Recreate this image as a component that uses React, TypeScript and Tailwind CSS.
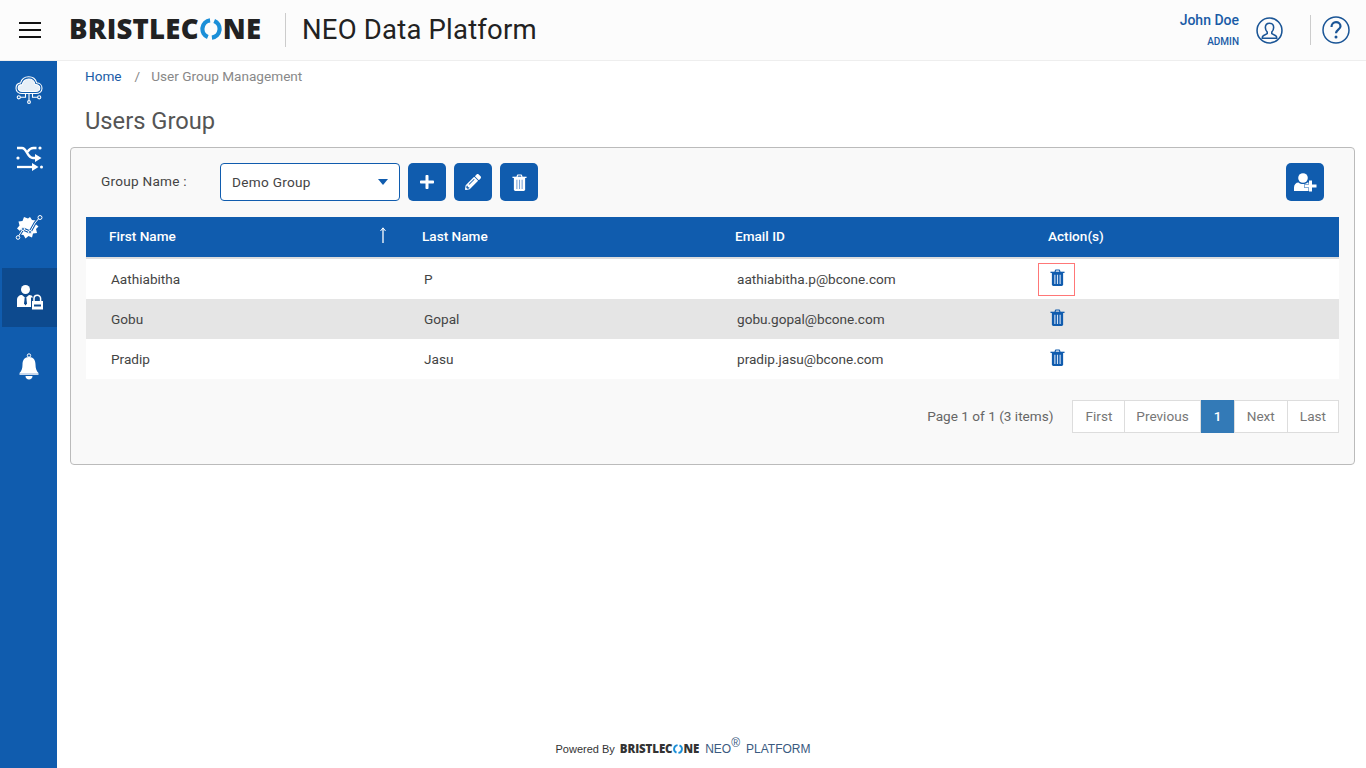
import { FaPlus, FaPencilAlt } from 'react-icons/fa';

const rows = [
  { first: 'Aathiabitha', last: 'P', email: 'aathiabitha.p@bcone.com' },
  { first: 'Gobu', last: 'Gopal', email: 'gobu.gopal@bcone.com' },
  { first: 'Pradip', last: 'Jasu', email: 'pradip.jasu@bcone.com' },
];

function Logo({ small }: { small?: boolean }) {
  return (
    <span
      className={
        small
          ? 'inline-flex items-center font-["Open_Sans",sans-serif] text-[11.5px] leading-none font-extrabold tracking-[-0.1px] text-[#333]'
          : 'inline-flex items-center font-["Open_Sans",sans-serif] text-[27.5px] leading-none font-extrabold tracking-[0.25px] text-[#222]'
      }
    >
      BRISTLEC
      <svg viewBox="0 0 24 24" className={small ? 'mx-[0.5px] h-[10px] w-[10px]' : 'mx-px h-[22px] w-[22px]'}>
        <path d="M15.500 3.200A9.500 9.500 0 0 1 13 21.400" fill="none" stroke="#1b8fd8" strokeWidth="4.600" />
        <path d="M8.500 20.800A9.500 9.500 0 0 1 11 2.600" fill="none" stroke="#1b8fd8" strokeWidth="4.600" />
      </svg>
      NE
    </span>
  );
}

function CloudIcon() {
  return (
    <svg viewBox="0 0 28 28" className="h-7 w-7" fill="none" stroke="#fff" strokeWidth="1.100">
      <path d="M7 17.500c-3.500 0-6-2.300-6-5.300 0-2.800 2-4.900 4.600-5.300C6.600 3 10 .8 13.700.8c4 0 7 2.600 8 6 3 .2 5.300 2.500 5.300 5.400 0 3-2.500 5.300-6 5.300Z" />
      <path d="M7.500 15.500c-2.500 0-4.300-1.500-4.300-3.500s1.700-3.400 4-3.400C8 5 10.500 3 13.700 3c3.300 0 5.700 2.300 6.300 5.500 2.700-.2 4.800 1.300 4.800 3.500s-1.800 3.500-4.300 3.500Z" fill="#fff" fillOpacity="0.9" />
      <path d="M14 17.500v7M10.500 17.500v3.800H5.500M17.500 17.500v3.800h5" />
      <circle cx="14" cy="26" r="1.400" />
      <circle cx="3.800" cy="21.300" r="1.600" />
      <circle cx="24.200" cy="21.300" r="1.600" />
    </svg>
  );
}

function FlowIcon() {
  return (
    <svg viewBox="0 0 28 28" className="h-7 w-7" fill="none" stroke="#fff" strokeWidth="2.300">
      <path d="M2 4h5c5 0 5 10 11 10h4" />
      <path d="M12.500 8c1.500-2.500 3-4 6-4h3" />
      <path d="M2 23h16" />
      <path d="M20 10l6.500 4-6.500 4zM17 19l6.500 4-6.500 4z" fill="#fff" stroke="none" />
      <circle cx="25" cy="4" r="1.600" fill="#fff" stroke="none" />
      <circle cx="3" cy="14" r="1.600" fill="#fff" stroke="none" />
      <circle cx="26.500" cy="23" r="1.500" fill="#fff" stroke="none" />
    </svg>
  );
}

function GearIcon() {
  return (
    <svg viewBox="0 0 28 28" className="h-7 w-7">
      <path
        d="M9 3l4 1.500L15 3l2 3 4 .5-.5 3.500 3 2.500-2.500 2.500 1 4-4 .5-1 4-3.500-1.500-3 2.500-2-3.500-4-.5.5-3.500-3-2.500 2.500-3-1-4 4-.5z"
        fill="#fff"
      />
      <path d="M3 23l5-8 7 3 5-9 5-6" fill="none" stroke="#105cae" strokeWidth="3" />
      <path d="M3 23l5-8 7 3 5-9 5-6" fill="none" stroke="#fff" strokeWidth="1" />
      <circle cx="25" cy="3.500" r="2" fill="#105cae" stroke="#fff" strokeWidth="1" />
      <circle cx="8" cy="15" r="1.500" fill="#105cae" stroke="#fff" strokeWidth="1" />
      <circle cx="15" cy="18" r="1.500" fill="#105cae" stroke="#fff" strokeWidth="1" />
      <circle cx="3" cy="23.500" r="1.800" fill="#105cae" stroke="#fff" strokeWidth="1" />
    </svg>
  );
}

function UserLockIcon() {
  return (
    <svg viewBox="0 0 28 28" className="h-7 w-7" fill="#fff">
      <circle cx="9.500" cy="5.500" r="4.500" />
      <path d="M1 23v-7c0-3 2-5 5-5l3.500 3 3.500-3c2 0 3.500 .8 4 2.500h-2v9.500Z" />
      <path d="M8.700 13.500h1.600l.7 6-1.500 2-1.500-2z" fill="#0d4a8e" />
      <path d="M18 17v-2.500a3.300 3.300 0 0 1 6.600 0V17" fill="none" stroke="#fff" strokeWidth="1.500" />
      <path d="M16 17h11v8.500H16z" />
      <path d="M18 20.500h7v2h-7z" fill="#0d4a8e" />
    </svg>
  );
}

function BellIcon() {
  return (
    <svg viewBox="0 0 28 28" className="h-7 w-7" fill="#fff">
      <circle cx="14" cy="2.500" r="1.700" fill="none" stroke="#fff" strokeWidth="1" />
      <path d="M14 4c4.500 0 6.500 3 6.500 7.500 0 4 1 6.500 3 8.500H4.500c2-2 3-4.500 3-8.500C7.500 7 9.500 4 14 4Z" />
      <path d="M4.500 20h19v2h-19z" fill="#c9d8ec" />
      <path d="M10.500 23h7c0 2-1.500 3.500-3.500 3.500s-3.500-1.500-3.500-3.500Z" />
    </svg>
  );
}

function TrashIcon({ body, stripe }: { body: string; stripe: string }) {
  return (
    <svg viewBox="0 0 16 18" className="h-[17px] w-[15px]">
      <path d="M5.200 3 6.200 1h3.600l1 2" fill="none" stroke={body} strokeWidth="1.300" />
      <path d="M.5 2.800h15v1.400H.5z" fill={body} />
      <path d="M2 4h12v12.500q0 1.500-1.500 1.500h-9Q2 18 2 16.500z" fill={body} />
      <path d="M4.600 6h1.200v10H4.600zM7.400 6h1.200v10H7.400zM10.200 6h1.200v10h-1.200z" fill={stripe} />
    </svg>
  );
}

function UserPlusIcon() {
  return (
    <svg viewBox="0 0 23 19" className="h-[19px] w-[23px]" fill="#fff">
      <circle cx="9" cy="5" r="4.800" />
      <path d="M0 18v-3.500C0 11.500 2 9.500 4.500 9.500c1.200 1 2.800 1.500 4.500 1.500s3.300-.5 4.500-1.500c1.500 0 2.500.5 3.500 1.500v7Z" />
      <path d="M15 7.500h3v4h4.500v3H18v4h-3v-4h-4.500v-3H15z" stroke="#105cae" strokeWidth="1" paintOrder="stroke" />
    </svg>
  );
}

function ActionButton({ children }: { children: React.ReactNode }) {
  return (
    <button className="flex h-[38px] w-[38px] items-center justify-center rounded-[5px] bg-[#105cae] text-white">
      {children}
    </button>
  );
}

function PageLink({ label, active, narrow }: { label: string; active?: boolean; narrow?: boolean }) {
  if (active) {
    return (
      <a className="flex h-[33px] w-[34px] items-center justify-center bg-[#337ab7] text-[13.6px] font-medium text-white">
        {label}
      </a>
    );
  }
  return (
    <a
      className={
        narrow
          ? 'ml-[-1px] flex h-[33px] items-center border border-[#ddd] bg-white px-[11px] text-[13.6px] text-[#777]'
          : 'ml-[-1px] flex h-[33px] items-center border border-[#ddd] bg-white px-3 text-[13.6px] text-[#777]'
      }
    >
      {label}
    </a>
  );
}

export default function App() {
  return (
    <div className='flex h-[768px] flex-col overflow-hidden bg-white font-["Roboto",sans-serif] text-[13.6px] text-[#444]'>
      <header className="flex h-[61px] shrink-0 items-center border-b border-[#eee] bg-[#fcfcfc]">
        <button className="ml-[19px] flex w-[22px] flex-col gap-[5px]">
          <span className="h-[2px] bg-[#111]" />
          <span className="h-[2px] bg-[#111]" />
          <span className="h-[2px] bg-[#111]" />
        </button>
        <div className="ml-[28px] flex w-[193px] pb-[2px]">
          <Logo />
        </div>
        <div className="ml-[23px] h-[34px] w-px bg-[#ccc]" />
        <h1 className="ml-4 text-[27.500px] leading-none font-normal tracking-[0.2px] text-[#222]">NEO Data Platform</h1>
        <div className="ml-auto flex flex-col items-end pb-[1px] text-[#1a5ba6]">
          <span className="text-[14px] leading-4 font-medium">John Doe</span>
          <span className="mt-[8px] text-[10px] leading-3 font-medium">ADMIN</span>
        </div>
        <svg viewBox="0 0 26 26" className="ml-[17px] h-[27px] w-[27px]" fill="none" stroke="#1a5596" strokeWidth="1.500">
          <circle cx="13" cy="13" r="12" />
          <path d="M13 6c-2.500 0-4 1.800-4 4.200 0 2 .8 3.300 1.800 4.300v1.500L7 18c-.8.400-1 1-1 2.500h14c0-1.500-.2-2.100-1-2.500l-3.800-2v-1.500c1-1 1.800-2.300 1.800-4.300C17 7.800 15.500 6 13 6Z" />
        </svg>
        <div className="ml-[27px] h-[30px] w-px bg-[#ccc]" />
        <svg viewBox="0 0 28 28" className="mr-4 ml-[11px] h-[28px] w-[28px]" fill="none" stroke="#1a5596" strokeWidth="1.500">
          <circle cx="14" cy="14" r="13" />
          <path d="M9.500 11c0-3 2-4.800 4.500-4.800s4.500 1.700 4.500 4c0 3.300-4.500 3.500-4.500 7" strokeWidth="2.200" />
          <circle cx="14" cy="21" r="1.500" fill="#1a5596" stroke="none" />
        </svg>
      </header>

      <div className="flex min-h-0 flex-1">
        <aside className="flex w-[57px] shrink-0 flex-col bg-[#105cae]">
          <div className="flex h-[60px] items-center justify-center pb-[2px]">
            <CloudIcon />
          </div>
          <div className="flex h-[70px] items-center justify-center pt-[4px]">
            <FlowIcon />
          </div>
          <div className="flex h-[77px] items-center justify-center pb-[3px]">
            <GearIcon />
          </div>
          <div className="ml-[2px] flex h-[59px] items-center justify-center bg-[#0d4a8e]">
            <UserLockIcon />
          </div>
          <div className="flex h-[80px] items-center justify-center">
            <BellIcon />
          </div>
        </aside>

        <main className="flex min-w-0 flex-1 flex-col pr-[11px] pl-[13px]">
          <nav className="flex h-[32px] items-center pb-[1px] pl-[15px]">
            <span className="text-[#1a5ba6]">Home</span>
            <span className="mr-[11px] ml-[13px] text-[#888]">/</span>
            <span className="text-[#888]">User Group Management</span>
          </nav>
          <h2 className="mt-[14px] pl-[15px] text-[23.700px] leading-7 font-normal text-[#555]">Users Group</h2>

          <section className="mt-[12px] h-[318px] rounded-[4px] border border-[#bbb] bg-[#f9f9f9] px-[15px]">
            <div className="flex h-[69px] items-center pb-[1px]">
              <label className="ml-[15px] w-[119px] pb-[2px] tracking-[0.25px] text-[#444]">Group Name :</label>
              <div className="flex h-[38px] w-[180px] items-center justify-between rounded-[4px] border border-[#105cae] bg-white px-[11px] tracking-[0.3px]">
                Demo Group
                <span className="h-0 w-0 border-x-[5px] border-t-[6px] border-x-transparent border-t-[#105cae]" />
              </div>
              <div className="ml-2 flex gap-2">
                <ActionButton>
                  <FaPlus size={16} />
                </ActionButton>
                <ActionButton>
                  <FaPencilAlt size={16} />
                </ActionButton>
                <ActionButton>
                  <TrashIcon body="#ffffff" stripe="#7ea6d8" />
                </ActionButton>
              </div>
              <div className="mr-[15px] ml-auto">
                <ActionButton>
                  <UserPlusIcon />
                </ActionButton>
              </div>
            </div>

            <table className="w-full table-fixed border-separate border-spacing-0">
              <thead>
                <tr className="bg-[#105cae] text-left font-medium text-white">
                  <th className="relative h-[42px] w-[313px] border-b-2 border-[#ddd] pb-[2px] pl-[23px] font-medium">
                    First Name
                    <svg viewBox="0 0 8 16" className="absolute top-[10px] right-[12px] h-[16px] w-[8px]" fill="none" stroke="#fff">
                      <path d="M4 1v15" strokeWidth="1.300" />
                      <path d="M1.500 4 4 .8 6.500 4" strokeWidth="1" />
                    </svg>
                  </th>
                  <th className="h-[42px] w-[313px] border-b-2 border-[#ddd] pb-[2px] pl-[23px] font-medium">Last Name</th>
                  <th className="h-[42px] w-[313px] border-b-2 border-[#ddd] pb-[2px] pl-[23px] font-medium">Email ID</th>
                  <th className="h-[42px] border-b-2 border-[#ddd] pb-[2px] pl-[23px] font-medium">Action(s)</th>
                </tr>
              </thead>
              <tbody>
                {rows.map((row, i) => (
                  <tr key={row.first} className={i === 1 ? 'h-[40px] bg-[#e5e5e5]' : 'h-[40px] bg-white'}>
                    <td className="pl-[25px]">{row.first}</td>
                    <td className="pl-[25px]">{row.last}</td>
                    <td className="pl-[25px]">{row.email}</td>
                    <td className="pl-[13px]">
                      <span
                        className={
                          i === 0
                            ? 'flex h-[33px] w-[37px] items-center justify-center border border-[#ff7777] pb-[4px] pl-[1px]'
                            : 'flex h-[33px] w-[37px] items-center justify-center pb-[3px] pl-[1px]'
                        }
                      >
                        <TrashIcon body="#105cae" stripe="#cfe0f5" />
                      </span>
                    </td>
                  </tr>
                ))}
              </tbody>
            </table>

            <div className="mt-[21px] flex items-center justify-end">
              <span className="mr-5 text-[#666]">Page 1 of 1 (3 items)</span>
              <PageLink label="First" />
              <PageLink label="Previous" narrow />
              <PageLink label="1" active />
              <PageLink label="Next" />
              <PageLink label="Last" />
            </div>
          </section>

          <footer className="mt-auto mr-[59px] flex h-[40px] items-center justify-center gap-[5px] pt-[2px] font-['Liberation_Sans',sans-serif] text-[11px] text-[#333]">
            <span>Powered By</span>
            <Logo small />
            <span className="ml-px text-xs text-[#3a5a80]">
              NEO<sup className="text-xs">®</sup>
            </span>
            <span className="ml-px text-xs text-[#3a5a80]">PLATFORM</span>
          </footer>
        </main>
      </div>
    </div>
  );
}
